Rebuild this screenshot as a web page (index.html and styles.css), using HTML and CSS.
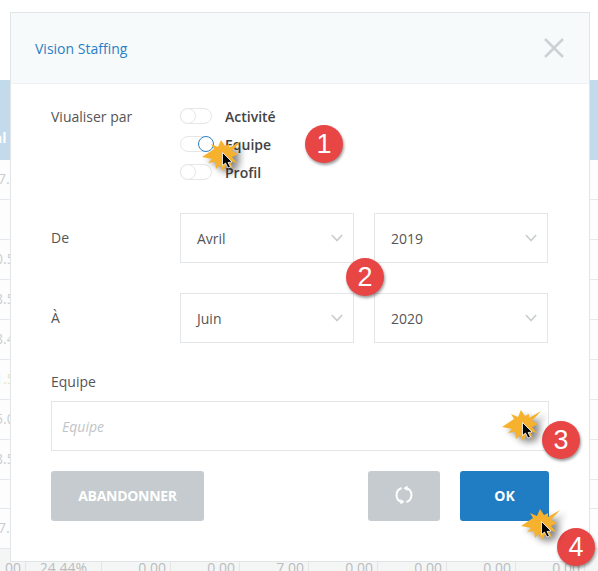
FILE: index.html
```html
<!DOCTYPE html>
<html>
    <head>
        <meta charset="utf-8">
        <title>Vision Staffing</title>
        <meta name="viewport" content="width=device-width, initial-scale=1.0" />
        <link rel="stylesheet" href="styles.css">
    </head>
    <body>
        <svg class="defs" width="0" height="0">
            <symbol id="click" viewBox="0 0 52 42">
                <g class="click-shadow">
                    <polygon class="burst" points="0,17 12,9 9,4 16,7 19,0 23,6 27,4 27,8 39,1 30,11 36,14 30,17 35,23 28,21 31,29 25,24 21,31 18,25 14,29 13,22 6,23 10,19"/>
                    <path class="arrow" d="M20.500 12.500 L20.500 25.500 L23.500 23 L26 28 L28.500 27 L26 22.500 L30 22 Z"/>
                </g>
            </symbol>
        </svg>

        <!-- table behind the dialog -->
        <div class="sheet">
            <div class="sheet-top"></div>
            <div class="sheet-head"><span class="cut">nl</span></div>
            <div class="sheet-row"><span class="cut">7.00</span></div>
            <div class="sheet-row"></div>
            <div class="sheet-row"><span class="cut far">0.50</span></div>
            <div class="sheet-row"><span class="cut far">8.50</span></div>
            <div class="sheet-row"><span class="cut far">8.40</span></div>
            <div class="sheet-row"><span class="cut far green">1.50</span></div>
            <div class="sheet-row"><span class="cut far">5.00</span></div>
            <div class="sheet-row"><span class="cut far">8.50</span></div>
            <div class="sheet-row short"></div>
            <div class="sheet-row"><span class="cut">7.00</span></div>
            <div class="sheet-total">
                <span class="cell first">00</span>
                <span class="cell wide">24.44%</span>
                <span class="cell">0.00</span>
                <span class="cell">0.00</span>
                <span class="cell">7.00</span>
                <span class="cell">0.00</span>
                <span class="cell">0.00</span>
                <span class="cell">0.00</span>
                <span class="cell">0.00</span>
            </div>
        </div>

        <div class="dialog">
            <div class="dialog-head">
                <span class="dialog-title">Vision Staffing</span>
                <svg class="close" width="20" height="20" viewBox="0 0 20 20"><path d="M1 1 L19 19 M19 1 L1 19"/></svg>
            </div>
            <div class="dialog-body">
                <div class="row-view">
                    <span class="label">Viualiser par</span>
                    <div class="toggles">
                        <div class="toggle-line"><span class="toggle"></span><span class="toggle-name">Activité</span></div>
                        <div class="toggle-line"><span class="toggle on"></span><span class="toggle-name">Equipe</span></div>
                        <div class="toggle-line"><span class="toggle"></span><span class="toggle-name">Profil</span></div>
                    </div>
                </div>

                <div class="row-date">
                    <span class="label">De</span>
                    <div class="select">Avril<svg class="chev" width="12" height="8" viewBox="0 0 14 9"><path d="M1 1 L7 7.500 L13 1"/></svg></div>
                    <div class="select">2019<svg class="chev" width="12" height="8" viewBox="0 0 14 9"><path d="M1 1 L7 7.500 L13 1"/></svg></div>
                </div>

                <div class="row-date">
                    <span class="label">À</span>
                    <div class="select">Juin<svg class="chev" width="12" height="8" viewBox="0 0 14 9"><path d="M1 1 L7 7.500 L13 1"/></svg></div>
                    <div class="select">2020<svg class="chev" width="12" height="8" viewBox="0 0 14 9"><path d="M1 1 L7 7.500 L13 1"/></svg></div>
                </div>

                <div class="field">
                    <span class="label">Equipe</span>
                    <div class="input">Equipe</div>
                </div>

                <div class="actions">
                    <button class="btn btn-cancel">ABANDONNER</button>
                    <button class="btn btn-reset">
                        <svg width="18" height="20" viewBox="0 0 18 20">
                            <path d="M6.500 3 A7.500 7.500 0 0 0 6 16.900"/>
                            <path d="M11.500 17 A7.500 7.500 0 0 0 12 3.100"/>
                            <path class="tip" d="M12.500 0.500 L12.500 6 L8.500 3.200 Z"/>
                            <path class="tip" d="M5.500 14 L5.500 19.500 L9.500 16.800 Z"/>
                        </svg>
                    </button>
                    <button class="btn btn-ok">OK</button>
                </div>
            </div>
        </div>

        <!-- annotations on top of the screenshot -->
        <span class="badge b1">1</span>
        <span class="badge b2">2</span>
        <span class="badge b3">3</span>
        <span class="badge b4">4</span>
        <svg class="click c1"><use href="#click"/></svg>
        <svg class="click c3"><use href="#click"/></svg>
        <svg class="click c4"><use href="#click"/></svg>
    </body>
</html>
```
FILE: styles.css
```css
html, body {
  margin: 0;
  padding: 0;
}
body {
  position: relative;
  width: 598px;
  height: 571px;
  overflow: hidden;
  background: #fff;
  font-family: "Open Sans", sans-serif;
  font-size: 14px;
  color: #555;
}
.defs {
  position: absolute;
}

/* table behind */
.sheet-top {
  height: 80px;
}
.sheet-head {
  height: 80px;
  background: #c3d9ec;
  color: #fff;
  font-weight: 700;
  line-height: 116px;
  box-sizing: border-box;
}
.sheet-row {
  height: 40px;
  line-height: 38px;
  box-sizing: border-box;
  border-bottom: 1px solid #e2e8ee;
  background: #fdfdfd;
  color: #c9cdd0;
  white-space: nowrap;
}
.sheet-row.short {
  height: 29px;
}
.cut {
  display: block;
  margin-left: -2px;
}
.cut.far {
  margin-left: -5px;
}
.sheet-head .cut {
  margin-left: -7px;
}
.green {
  color: #dfe8c8;
}
.sheet-total {
  display: flex;
  height: 38px;
  line-height: 38px;
  background: #f4f5f5;
  color: #b9bdc0;
}
.cell {
  width: 69px;
  box-sizing: border-box;
  padding-right: 4px;
  border-right: 1px solid #e3e5e6;
  text-align: right;
  flex: none;
}
.cell.first {
  width: 26px;
}
.cell.wide {
  width: 76px;
  padding-right: 0;
  text-align: center;
}

/* dialog */
.dialog {
  position: absolute;
  left: 10px;
  top: 12px;
  width: 580px;
  height: 550px;
  box-sizing: border-box;
  background: #fff;
  border: 1px solid #e2e5e8;
}
.dialog-head {
  display: flex;
  align-items: center;
  justify-content: space-between;
  height: 70px;
  padding: 0 25px 0 24px;
  background: #f7fafb;
  border-bottom: 1px solid #eef1f3;
}
.dialog-title {
  color: #2a80c5;
}
.close path {
  fill: none;
  stroke: #cdd1d4;
  stroke-width: 2.500;
}
.dialog-body {
  padding: 24px 40px 0;
}
.row-view {
  display: flex;
}
.label {
  display: block;
  width: 129px;
  flex: none;
}
.row-view .label {
  line-height: 18px;
}
.toggles {
  display: flex;
  flex-direction: column;
  gap: 10px;
}
.toggle-line {
  display: flex;
  height: 18px;
  line-height: 18px;
}
.toggle {
  position: relative;
  display: block;
  width: 32px;
  height: 16px;
  box-sizing: border-box;
  border: 1px solid #e4e6e8;
  border-radius: 8px;
  margin-right: 13px;
}
.toggle::before {
  content: "";
  position: absolute;
  left: -1px;
  top: -1px;
  width: 16px;
  height: 16px;
  box-sizing: border-box;
  border: 1px solid #e4e6e8;
  border-radius: 50%;
  background: #fff;
}
.toggle.on::before {
  left: 17px;
  border-color: #2a80c5;
}
.toggle-name {
  font-weight: 600;
  color: #444;
}
.row-date {
  display: flex;
  align-items: center;
  margin-top: 30px;
}
.row-view + .row-date {
  margin-top: 31px;
}
.row-date .label {
  padding-bottom: 2px;
}
.select {
  display: flex;
  align-items: center;
  justify-content: space-between;
  width: 174px;
  height: 50px;
  box-sizing: border-box;
  padding: 0 10px 0 16px;
  border: 1px solid #e3e6e8;
  color: #555;
}
.select + .select {
  margin-left: 20px;
}
.chev path {
  fill: none;
  stroke: #c9ced1;
  stroke-width: 2;
}
.field {
  margin-top: 30px;
}
.field .label {
  width: auto;
  line-height: 18px;
  margin-bottom: 10px;
}
.input {
  width: 498px;
  height: 50px;
  line-height: 50px;
  box-sizing: border-box;
  padding-left: 10px;
  border: 1px solid #e3e6e8;
  font-style: italic;
  color: #bfc5c9;
}
.actions {
  display: flex;
  margin-top: 20px;
}
.btn {
  height: 50px;
  padding: 0 0 2px;
  border: none;
  border-radius: 3px;
  font-family: "Open Sans", sans-serif;
  font-size: 14px;
  font-weight: 700;
  color: #fff;
}
.btn-cancel {
  width: 153px;
  background: #c5cbce;
  letter-spacing: -0.300px;
}
.btn-reset {
  width: 72px;
  margin-left: 164px;
  background: #c5cbce;
}
.btn-reset svg {
  display: block;
  margin: 0 auto;
}
.btn-reset path {
  fill: none;
  stroke: #fff;
  stroke-width: 2;
}
.btn-reset path.tip {
  fill: #fff;
  stroke: none;
}
.btn-ok {
  width: 89px;
  margin-left: 20px;
  background: #217dc3;
}

/* annotations */
.badge {
  position: absolute;
  width: 38px;
  height: 38px;
  border-radius: 50%;
  background: #e84545;
  box-shadow: 1px 2px 3px rgba(0, 0, 0, 0.4);
  color: #fff;
  font-family: "Liberation Sans", sans-serif;
  font-size: 27px;
  line-height: 38px;
  text-align: center;
}
.b1 { left: 305px; top: 125px; }
.b2 { left: 346px; top: 258px; }
.b3 { left: 542px; top: 421px; }
.b4 { left: 557px; top: 528px; }
.click {
  position: absolute;
  width: 52px;
  height: 42px;
}
.c1 { left: 202px; top: 140px; }
.c3 { left: 502px; top: 410px; }
.c4 { left: 521px; top: 509px; }
.click-shadow {
  filter: drop-shadow(5px 4px 3px rgba(0, 0, 0, 0.45));
}
.burst {
  fill: #f6b22e;
}
.arrow {
  fill: #000;
  stroke: #fff;
  stroke-width: 0.800;
}
```
